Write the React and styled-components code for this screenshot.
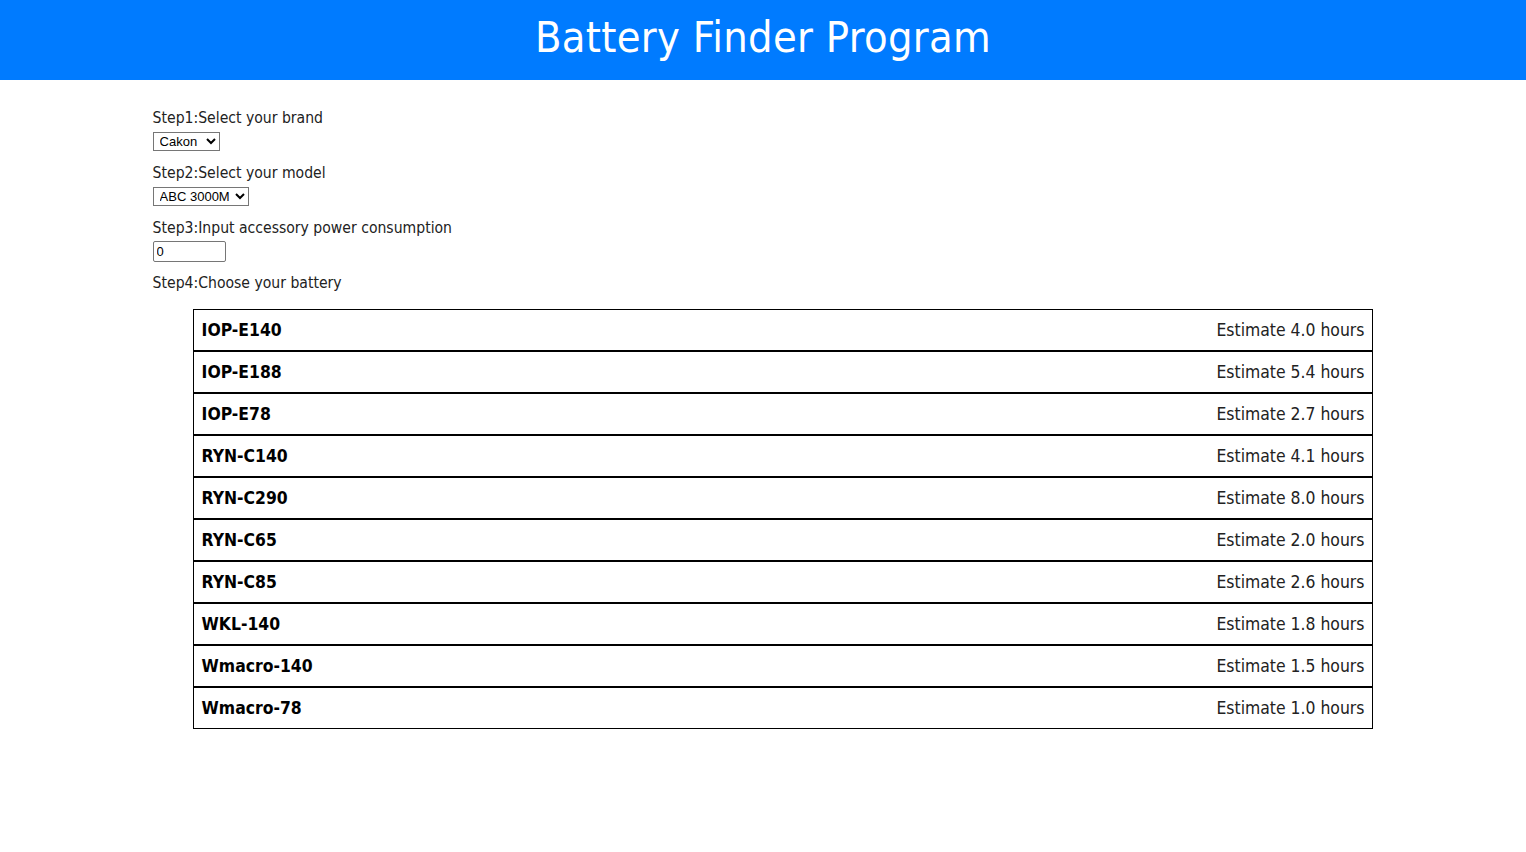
import React, { useState } from 'react'
import styled, { createGlobalStyle } from 'styled-components'

const GlobalStyle = createGlobalStyle`
  body {
    margin: 0;
    background: #fff;
    font-family: "DejaVu Sans Condensed", "DejaVu Sans", sans-serif;
    color: #222;
  }
`

const Header = styled.header`
  height: 80px;
  background: #007bff;
  display: flex;
  align-items: center;
  justify-content: center;
`

const Title = styled.h1`
  margin: 0;
  color: #fff;
  font-weight: normal;
  font-size: 43px;
  letter-spacing: 0.3px;
  padding-bottom: 6px;
`

const Main = styled.main`
  width: 80%;
  margin: 0 auto;
  padding-top: 29px;
`

const Step = styled.div`
  height: 55px;
  display: flex;
  flex-direction: column;
  align-items: flex-start;
  gap: 5px;
`

const Label = styled.div`
  font-size: 15.6px;
  line-height: 18px;
  color: #222;
`

const Select = styled.select`
  font-family: "Liberation Sans", Arial, sans-serif;
  font-size: 13px;
  height: 19px;
  padding: 0 0 0 2px;
  border: 1px solid #767676;
  border-radius: 0;
  background: #fff;
  color: #000;
  width: ${p => p.$w}px;
`

const Input = styled.input`
  font-family: "Liberation Sans", Arial, sans-serif;
  font-size: 13px;
  width: 73px;
  height: 21px;
  box-sizing: border-box;
  padding: 0 3px;
  margin-top: -1px;
  border: 1px solid #767676;
  border-radius: 2px;
`

const List = styled.ul`
  list-style: none;
  margin: 17px 0 0;
  padding: 0 0 0 40px;
`

const Item = styled.li`
  display: flex;
  justify-content: space-between;
  align-items: center;
  height: 40px;
  padding: 0 8px;
  border: 1px solid #000;
  font-size: 17.4px;
`

const Name = styled.span`
  font-weight: bold;
  color: #000;
`

const Estimate = styled.span`
  color: #222;
`

const batteries = [
  ['IOP-E140', '4.0'],
  ['IOP-E188', '5.4'],
  ['IOP-E78', '2.7'],
  ['RYN-C140', '4.1'],
  ['RYN-C290', '8.0'],
  ['RYN-C65', '2.0'],
  ['RYN-C85', '2.6'],
  ['WKL-140', '1.8'],
  ['Wmacro-140', '1.5'],
  ['Wmacro-78', '1.0'],
]

export default function App() {
  const [brand, setBrand] = useState('Cakon')
  const [model, setModel] = useState('ABC 3000M')
  const [power, setPower] = useState('0')

  return (
    <>
      <GlobalStyle />
      <Header>
        <Title>Battery Finder Program</Title>
      </Header>
      <Main>
        <Step>
          <Label>Step1:Select your brand</Label>
          <Select $w={67} value={brand} onChange={e => setBrand(e.target.value)}>
            <option>Cakon</option>
            <option>Sinon</option>
          </Select>
        </Step>
        <Step>
          <Label>Step2:Select your model</Label>
          <Select $w={96} value={model} onChange={e => setModel(e.target.value)}>
            <option>ABC 3000M</option>
          </Select>
        </Step>
        <Step>
          <Label>Step3:Input accessory power consumption</Label>
          <Input value={power} onChange={e => setPower(e.target.value)} />
        </Step>
        <Label>Step4:Choose your battery</Label>
        <List>
          {batteries.map(([name, hrs]) => (
            <Item key={name}>
              <Name>{name}</Name>
              <Estimate>Estimate {hrs} hours</Estimate>
            </Item>
          ))}
        </List>
      </Main>
    </>
  )
}
